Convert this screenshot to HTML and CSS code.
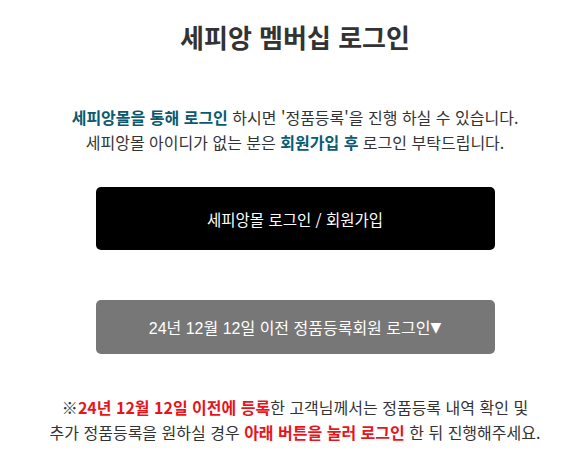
FILE: index.html
```html
<!DOCTYPE html>
<html lang="ko">
<head>
<meta charset="utf-8">
<title>세피앙 멤버십 로그인</title>
<link rel="stylesheet" href="styles.css">
</head>
<body>
<div class="wrap">
  <h1 class="title">세피앙 멤버십 로그인</h1>
  <p class="intro">
    <b class="teal">세피앙몰을 통해 로그인</b> 하시면 '정품등록'을 진행 하실 수 있습니다.<br>
    세피앙몰 아이디가 없는 분은 <b class="teal">회원가입 후</b> 로그인 부탁드립니다.
  </p>
  <a class="btn btn-black" href="#">세피앙몰 로그인 / 회원가입</a>
  <a class="btn btn-gray" href="#">24년 12월 12일 이전 정품등록회원 로그인<span class="arrow">▼</span></a>
  <p class="notice">
    ※<b class="red">24년 12월 12일 이전에 등록</b>한 고객님께서는 정품등록 내역 확인 및<br>
    추가 정품등록을 원하실 경우 <b class="red">아래 버튼을 눌러 로그인</b> 한 뒤 진행해주세요.
  </p>
</div>
</body>
</html>
```

FILE: styles.css
```css
html, body {
  margin: 0;
  padding: 0;
  background: #fff;
}
body {
  font-family: "Noto Sans CJK KR", "Noto Sans", sans-serif;
  color: #333;
}
.wrap {
  display: flex;
  flex-direction: column;
  align-items: center;
  padding: 19px 0 0 10px;
}
.title {
  margin: 0;
  font-size: 26px;
  line-height: 36px;
  font-weight: 700;
  color: #333;
}
.intro, .notice {
  margin: 50px 0 0;
  font-size: 16px;
  line-height: 25px;
  text-align: center;
}
.notice {
  margin-top: 41px;
}
.teal {
  color: #0b5b70;
  font-weight: 700;
}
.red {
  color: #e8141c;
  font-weight: 700;
}
.btn {
  display: flex;
  align-items: center;
  justify-content: center;
  width: 399px;
  border-radius: 5px;
  color: #fff;
  text-decoration: none;
  font-size: 15.5px;
}
.btn-black {
  margin-top: 32px;
  height: 63px;
  background: #000;
}
.btn-gray {
  margin-top: 50px;
  height: 54px;
  background: #777;
  font-family: "Liberation Sans", "Noto Sans CJK KR", sans-serif;
  font-size: 16px;
}
.arrow {
  font-family: "DejaVu Sans", sans-serif;
  font-size: 14px;
}
```
